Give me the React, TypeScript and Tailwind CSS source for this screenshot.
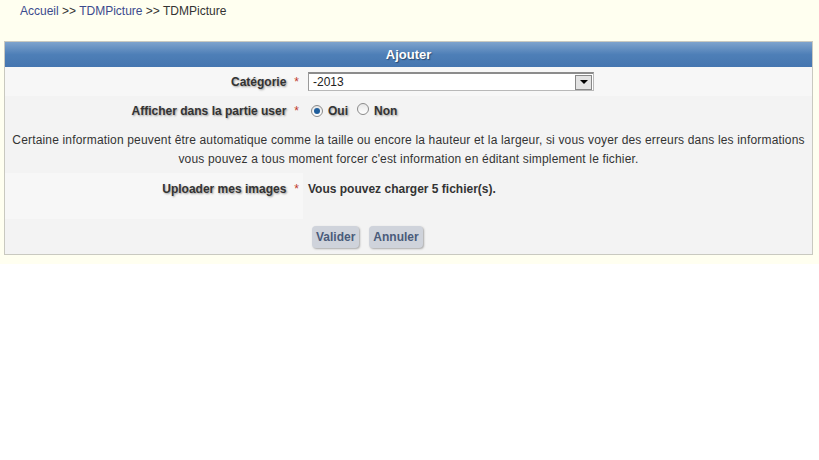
import React from "react";

const labelCls =
  "flex items-center justify-end pr-[4px] font-bold text-[#333] [text-shadow:1px_1px_2px_#9a9a9a]";

function Star() {
  return <span className="ml-[8px] text-[#c0392b] font-normal [text-shadow:none]">*</span>;
}

function Radio({ checked }: { checked?: boolean }) {
  return (
    <span className="inline-flex w-[12px] h-[12px] rounded-full border border-[#8a8a8a] bg-gradient-to-b from-[#e6e6e6] to-white items-center justify-center">
      {checked && <span className="w-[6px] h-[6px] rounded-full bg-[#1f5e9c]" />}
    </span>
  );
}

export default function App() {
  return (
    <div className="w-[819px] h-[460px] bg-white font-['Liberation_Sans',Arial,sans-serif] text-[12px]">
      <div className="bg-[#fffff0] pb-[9px]">
        <div className="h-[41px] pl-[20px] pt-[2px] text-[#333]">
          <a className="text-[#3b4b8e]">Accueil</a> &gt;&gt; <a className="text-[#3b4b8e]">TDMPicture</a> &gt;&gt; TDMPicture
        </div>
        <div className="ml-[4px] w-[809px] border border-[#c9c9c0] bg-[#f3f3f3]">
          <div className="h-[25px] flex items-center justify-center bg-gradient-to-b from-[#7ea3cd] via-[#4e7fb7] to-[#4576b0] text-white font-bold text-[13px] [text-shadow:1px_1px_1px_#2a4a70]">
            Ajouter
          </div>
          <div className="grid grid-cols-[298px_1fr]">
            <div className={`${labelCls} h-[29px] bg-[#f7f7f7]`}>
              Catégorie
              <Star />
            </div>
            <div className="flex items-center pl-[5px] bg-[#f7f7f7]">
              <div className="w-[286px] h-[19px] flex items-center justify-between bg-white border border-[#b8b8b8] border-t-2 border-t-[#8c8c8c] border-l-[#9a9a9a] pl-[4px] pr-[1px]">
                <span className="text-[#222]">-2013</span>
                <span className="w-[17px] h-[15px] flex items-center justify-center bg-[#e3e3e3] border border-[#888]">
                  <span className="w-0 h-0 border-l-[4px] border-r-[4px] border-t-[4px] border-l-transparent border-r-transparent border-t-black" />
                </span>
              </div>
            </div>
            <div className={`${labelCls} h-[30px]`}>
              Afficher dans la partie user
              <Star />
            </div>
            <div className="flex items-center pl-[8px] font-bold text-[#333] [text-shadow:1px_1px_2px_#9a9a9a]">
              <Radio checked />
              <span className="ml-[5px]">Oui</span>
              <span className="ml-[9px]">
                <Radio />
              </span>
              <span className="ml-[5px]">Non</span>
            </div>
            <div className="col-span-2 text-center text-[#333] leading-[19px] pt-[5px] pb-[4px] px-[4px] tracking-[0.17px]">
              Certaine information peuvent être automatique comme la taille ou encore la hauteur et la largeur, si vous voyer des erreurs dans les informations vous pouvez a tous moment forcer c'est information en éditant simplement le fichier.
            </div>
            <div className={`${labelCls} items-start pt-[7px] h-[46px] bg-[#f7f7f7]`}>
              Uploader mes images
              <Star />
            </div>
            <div className="pl-[5px] pt-[7px] font-bold text-[#333]">Vous pouvez charger 5 fichier(s).</div>
            <div className="h-[35px]" />
            <div className="flex items-center pl-[9px] gap-[10px]">
              <button className="h-[22px] px-[4px] rounded-[4px] bg-[#cfd3db] text-[#4a5b7a] font-bold shadow-[1px_1px_2px_#a8a8a8]">
                Valider
              </button>
              <button className="h-[22px] px-[4px] rounded-[4px] bg-[#cfd3db] text-[#4a5b7a] font-bold shadow-[1px_1px_2px_#a8a8a8]">
                Annuler
              </button>
            </div>
          </div>
        </div>
      </div>
    </div>
  );
}
